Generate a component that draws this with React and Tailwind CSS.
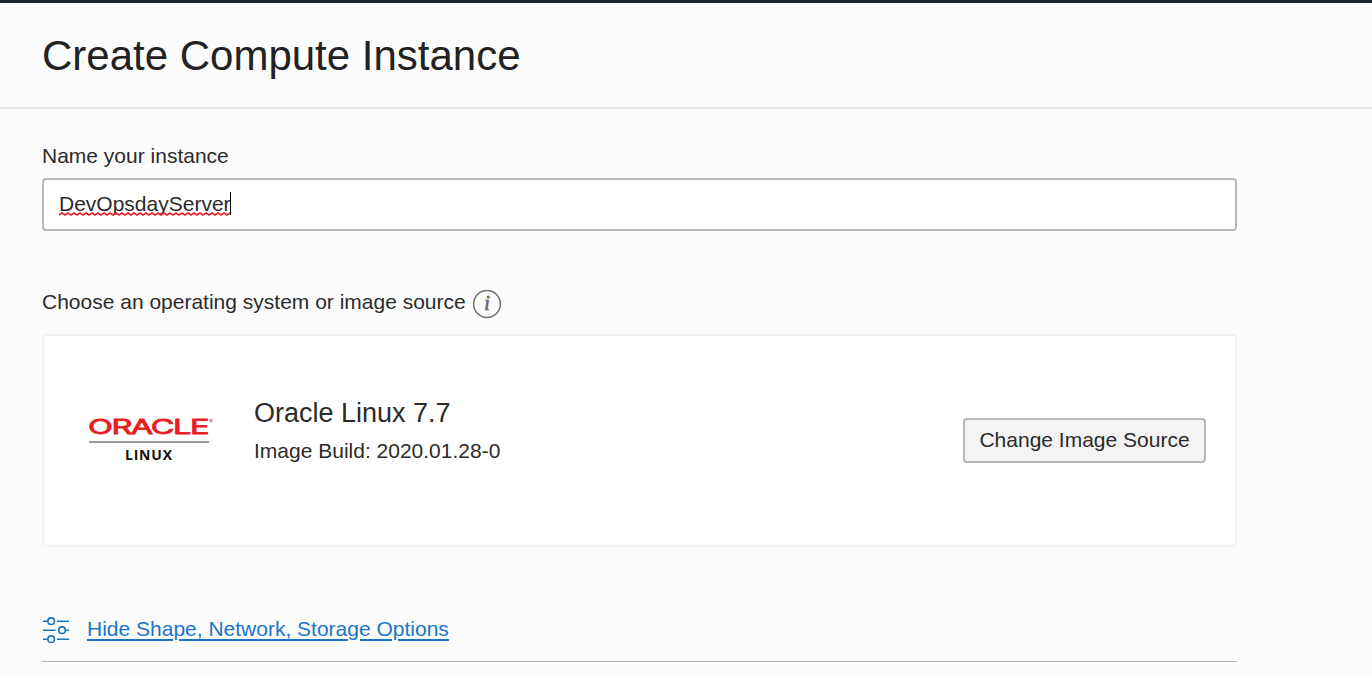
import React from "react";

function InfoIcon() {
  return (
    <svg className="ml-[6px] mt-[4px] block h-[30px] w-[30px]" viewBox="0 0 30 30" fill="none">
      <circle cx="15" cy="15" r="13.4" stroke="#6f6f6f" strokeWidth="1.5" />
      <text x="15" y="21" textAnchor="middle" fill="#666" stroke="#666" strokeWidth="0.7" fontSize="20" fontStyle="italic" fontFamily="'Liberation Serif', serif">
        i
      </text>
    </svg>
  );
}

function OracleLinuxLogo() {
  return (
    <svg className="mt-px block h-[60px] w-[130px]" viewBox="0 0 130 60">
      <text
        x="4"
        y="22.8"
        fill="#ea1b22"
        stroke="#ea1b22"
        strokeWidth="0.8"
        fontSize="20.5"
        letterSpacing="-0.9"
        fontFamily="Inter, sans-serif"
        textLength="120"
        lengthAdjust="spacingAndGlyphs"
      >
        ORACLE
      </text>
      <circle cx="127" cy="9.4" r="1.3" fill="#f3a0a3" stroke="#ee6a6e" strokeWidth="0.8" />
      <rect x="5" y="30" width="120" height="2" fill="#9a9a9a" />
      <text x="41" y="49.3" fill="#111" fontSize="14" fontWeight="700" fontFamily="'Open Sans', sans-serif" textLength="47" lengthAdjust="spacing">
        LINUX
      </text>
    </svg>
  );
}

function SlidersIcon() {
  return (
    <svg className="block h-[28px] w-[28px]" viewBox="0 0 28 28" fill="none" stroke="#1b75bc" strokeWidth="1.6">
      <path d="M1 5.2h5M15 5.2h12M1 14.2h12.5M23.5 14.2h3.5M1 23.2h5M15 23.2h12" />
      <circle cx="9.2" cy="5.2" r="3.3" />
      <circle cx="20" cy="14.2" r="3.3" />
      <circle cx="9.2" cy="23.2" r="3.3" />
    </svg>
  );
}

function Squiggle() {
  const points = Array.from({ length: 58 }, (_, i) => `${i * 3},${i % 2 ? 1 : 3}`).join(" ");
  return (
    <svg className="absolute left-0 top-[20px] h-[4px] w-[172px]" viewBox="0 0 172 4" fill="none">
      <polyline points={points} stroke="#e3242b" strokeWidth="1.6" />
    </svg>
  );
}

export default function App() {
  return (
    <div className="h-[676px] overflow-hidden bg-[#fcfcfc] font-['Liberation_Sans',Arial,sans-serif] text-[21px] leading-[24px] text-[#2b2b2b]">
      <header className="h-[109px] border-b-2 border-t-[3px] border-b-[#e4e4e4] border-t-[#1e262f] pl-[42px] pt-[29px]">
        <h1 className="text-[42px] leading-[48px] text-[#222]">Create Compute Instance</h1>
      </header>

      <main className="ml-[42px] flex w-[1195px] flex-col">
        <label className="mt-[35px] block h-[24px]">Name your instance</label>
        <div className="mt-[10px] flex h-[53px] items-center rounded-[4px] border-2 border-[#b5b8be] bg-white pl-[15px]">
          <div className="relative -mt-[2px] flex h-[24px] items-center">
            <span>DevOpsdayServer</span>
            <span className="-ml-px h-[23px] w-px bg-black" />
            <Squiggle />
          </div>
        </div>

        <div className="mt-[54px] flex h-[49px] items-start">
          <span className="mt-[5px]">Choose an operating system or image source</span>
          <InfoIcon />
        </div>

        <section className="flex h-[213px] items-center rounded-[4px] border-2 border-[#f3f3f3] bg-white pl-[40px] pr-[29px]">
          <OracleLinuxLogo />
          <div className="-mt-[22px] ml-[40px] flex flex-col gap-[9px]">
            <h2 className="text-[27px] leading-[34px]">Oracle Linux 7.7</h2>
            <p>Image Build: 2020.01.28-0</p>
          </div>
          <button className="ml-auto h-[45px] w-[243px] whitespace-nowrap rounded-[4px] border-2 border-[#b5b8be] bg-[#f4f4f4] pb-[2px]">
            Change Image Source
          </button>
        </section>

        <div className="mt-[69px] flex h-[46px] items-start border-b border-[#b4b4b4]">
          <SlidersIcon />
          <a className="ml-[17px] mt-px text-[#1b75c9] underline decoration-2 underline-offset-[3px]">Hide Shape, Network, Storage Options</a>
        </div>
      </main>
    </div>
  );
}
